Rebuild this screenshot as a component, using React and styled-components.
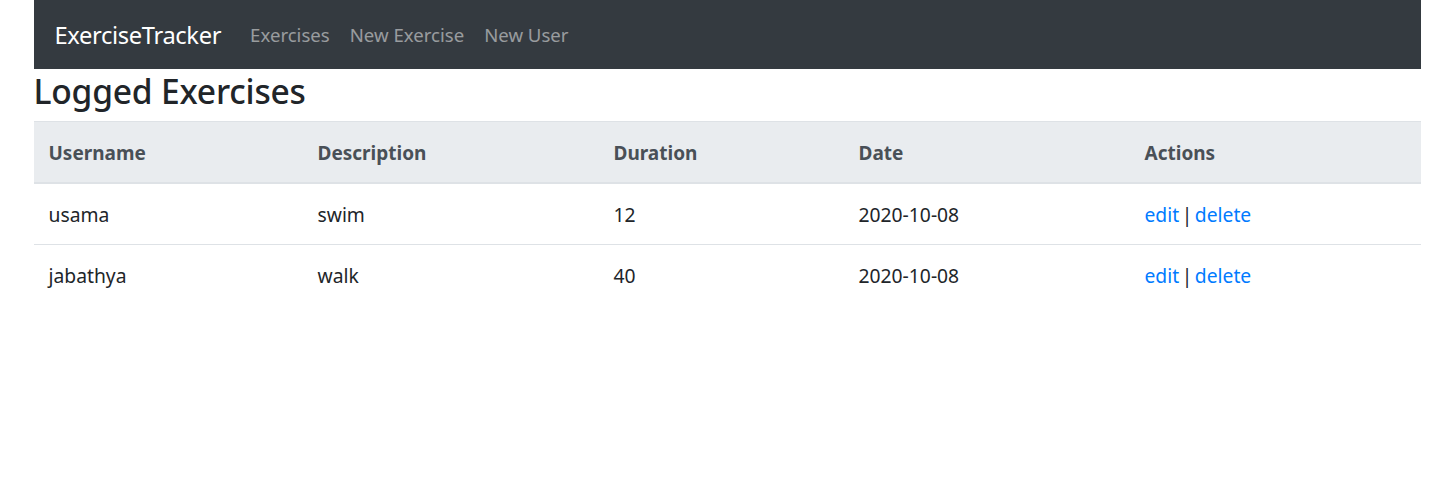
import React from "react";
import styled, { createGlobalStyle } from "styled-components";

const Global = createGlobalStyle`
  html, body { margin: 0; padding: 0; background: #fff; }
  body {
    font-family: "Noto Sans", "Open Sans", sans-serif;
    font-size: 20px;
    line-height: 1.5;
    color: #212529;
    padding-left: 1px;
  }
  * { box-sizing: border-box; }
`;

const Container = styled.div`
  width: 1387px;
  margin: 0 auto;
`;

const Navbar = styled.nav`
  display: flex;
  align-items: center;
  height: 69px;
  padding: 0 20px 0 21px;
  background: #343a40;
`;

const Brand = styled.a`
  font-size: 23.7px;
  color: #fff;
  margin-right: 19px;
  text-decoration: none;
  letter-spacing: -0.35px;
  padding-top: 2px;
`;

const NavList = styled.div`
  display: flex;
`;

const NavLink = styled.a`
  color: rgba(255, 255, 255, 0.5);
  padding: 1px 10px 0;
  font-size: 18.6px;
  text-decoration: none;
  letter-spacing: 0;
`;

const Title = styled.h3`
  margin: 0 0 10px;
  padding-top: 2px;
  font-size: 33.6px;
  font-weight: 500;
  line-height: 40px;
  color: #212529;
  letter-spacing: -0.2px;
`;

const Table = styled.table`
  width: 100%;
  border-collapse: collapse;
  table-layout: fixed;
`;

const Th = styled.th`
  text-align: left;
  padding: 16px 15px 14px;
  font-size: 19px;
  font-weight: 700;
  line-height: 30px;
  color: #495057;
  background: #e9ecef;
  border-top: 1px solid #dee2e6;
  border-bottom: 2px solid #dee2e6;
  width: ${(p) => p.$w}px;
`;

const Td = styled.td`
  padding: 16px 15px 14px;
  font-size: 19.3px;
  line-height: 30px;
  border-top: 1px solid #dee2e6;
  word-spacing: ${(p) => (p.$tight ? "-2.5px" : "0")};
`;

const Link = styled.a`
  color: #007bff;
  text-decoration: none;
`;

const cols = [
  ["Username", 269],
  ["Description", 296],
  ["Duration", 245],
  ["Date", 286],
  ["Actions", 291],
];

const rows = [
  ["usama", "swim", "12", "2020-10-08"],
  ["jabathya", "walk", "40", "2020-10-08"],
];

export default function App() {
  return (
    <>
      <Global />
      <Container>
        <Navbar>
          <Brand href="#">ExerciseTracker</Brand>
          <NavList>
            <NavLink href="#">Exercises</NavLink>
            <NavLink href="#">New Exercise</NavLink>
            <NavLink href="#">New User</NavLink>
          </NavList>
        </Navbar>
        <Title>Logged Exercises</Title>
        <Table>
          <thead>
            <tr>
              {cols.map(([c, w]) => (
                <Th key={c} $w={w}>{c}</Th>
              ))}
            </tr>
          </thead>
          <tbody>
            {rows.map((r, i) => (
              <tr key={i}>
                {r.map((v, j) => (
                  <Td key={j}>{v}</Td>
                ))}
                <Td $tight>
                  <Link href="#">edit</Link> | <Link href="#">delete</Link>
                </Td>
              </tr>
            ))}
          </tbody>
        </Table>
      </Container>
    </>
  );
}
